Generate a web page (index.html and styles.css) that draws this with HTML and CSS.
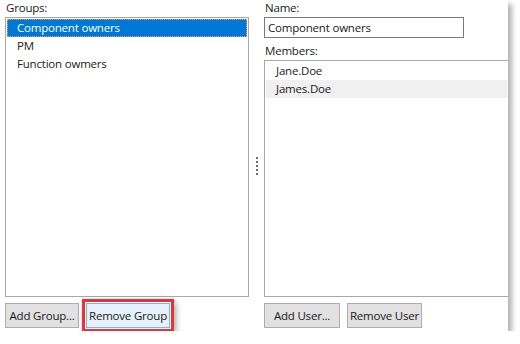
FILE: index.html
```html
<!DOCTYPE html>
<html lang="en">
<head>
    <meta charset="UTF-8">
    <title>Groups</title>
    <link rel="stylesheet" href="styles.css">
</head>
<body>
    <div class="window">
        <!-- groups column -->
        <div class="column">
            <label class="caption">Groups:</label>
            <ul class="listbox groups">
                <li class="selected">Component owners</li>
                <li>PM</li>
                <li>Function owmers</li>
            </ul>
            <div class="buttons">
                <button class="btn add-group">Add Group...</button>
                <button class="btn remove-group marked">Remove Group</button>
            </div>
        </div>

        <!-- splitter -->
        <div class="splitter">
            <span></span><span></span><span></span><span></span><span></span>
        </div>

        <!-- details column -->
        <div class="column">
            <label class="caption">Name:</label>
            <input class="textbox" type="text" value="Component owners">
            <label class="caption members-caption">Members:</label>
            <ul class="listbox members">
                <li>Jane.Doe</li>
                <li class="hover">James.Doe</li>
            </ul>
            <div class="buttons">
                <button class="btn add-user">Add User...</button>
                <button class="btn remove-user">Remove User</button>
            </div>
        </div>
    </div>
</body>
</html>
```
FILE: styles.css
```css
* {
    margin: 0;
    padding: 0;
    box-sizing: border-box;
}

body {
    background-color: #fff;
    font-family: "Open Sans", "Noto Sans", sans-serif;
    font-size: 11.5px;
    letter-spacing: -0.2px;
    color: #1a1a1a;
}

/* window with shadow */
.window {
    width: 508px;
    height: 331px;
    background-color: #fff;
    display: grid;
    grid-template-columns: 244px 15px 1fr;
    padding-left: 5px;
    box-shadow: 4px 4px 5px rgba(0, 0, 0, 0.3);
}

.column {
    display: flex;
    flex-direction: column;
    min-width: 0;
}

.caption {
    height: 17px;
    line-height: 15px;
    padding-left: 1px;
}

.members-caption {
    margin-top: 4px;
    height: 18px;
    line-height: 17px;
}

.listbox {
    list-style-type: none;
    border: 1px solid #a8a8a8;
    padding: 1px;
    flex: 1;
}

.listbox li {
    height: 18px;
    line-height: 17px;
    padding-left: 10px;
}

.groups li.selected {
    background-color: #0078d7;
    color: #fff;
    outline: 1px dotted #f5a23a;
    outline-offset: -1px;
}

.members {
    border-right: none;
}

.members li.hover {
    background-color: #f0f0f0;
}

.textbox {
    width: 200px;
    height: 21px;
    border: 1px solid #7a7a7a;
    font: inherit;
    letter-spacing: inherit;
    color: inherit;
    padding: 0 3px;
}

/* bottom buttons */
.buttons {
    display: flex;
    gap: 7px;
    height: 34px;
    padding-top: 6px;
}

.btn {
    height: 25px;
    padding: 0;
    font: inherit;
    letter-spacing: inherit;
    color: inherit;
    background-color: #e1e1e1;
    border: 1px solid #adadad;
}

.add-group { width: 74px; }
.remove-group { width: 84px; }
.add-user { width: 76px; }
.remove-user { width: 75px; }

.btn.marked {
    background-color: #e5f1fb;
    border-color: #7eb4ea;
    outline: 3px solid #ee2f36;
    outline-offset: 1px;
    box-shadow: 0 0 0 4px #fff, 2px 3px 6px 4px rgba(0, 0, 0, 0.35);
}

/* splitter grip */
.splitter {
    display: flex;
    flex-direction: column;
    align-items: center;
    justify-content: center;
    gap: 2px;
    padding-bottom: 0;
}

.splitter span {
    width: 2px;
    height: 2px;
    background-color: #6d6d6d;
}
```
